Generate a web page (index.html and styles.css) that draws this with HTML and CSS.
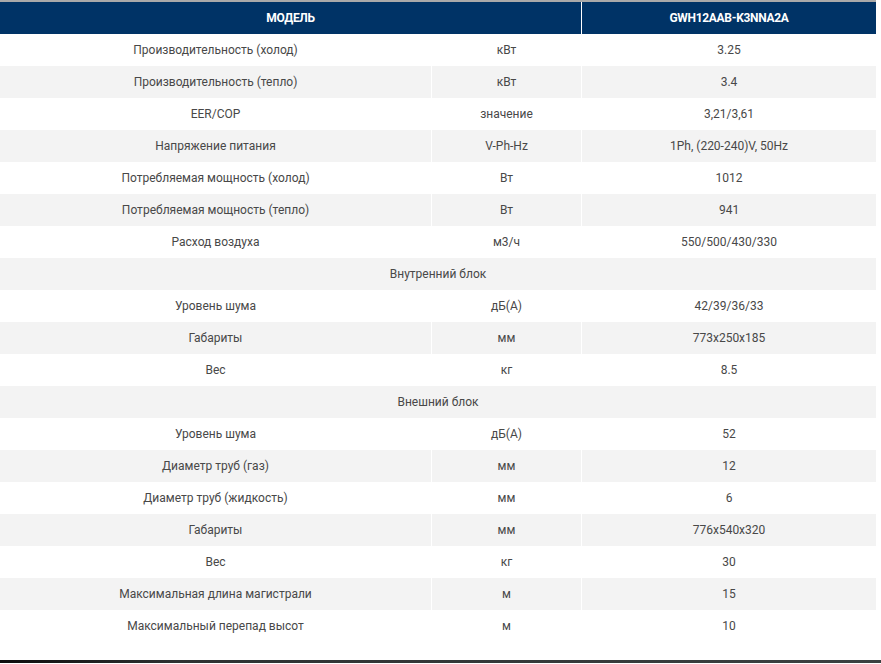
FILE: index.html
```html
<!DOCTYPE html>
<html lang="ru">
<head>
<meta charset="utf-8">
<title>GWH12AAB-K3NNA2A</title>
<link rel="stylesheet" href="styles.css">
</head>
<body>
<div class="page">
  <div class="top-line"></div>
  <table class="specs">
    <colgroup>
      <col class="c1"><col class="c2"><col class="c3">
    </colgroup>
    <thead>
      <tr><th colspan="2">МОДЕЛЬ</th><th class="sep">GWH12AAB-K3NNA2A</th></tr>
    </thead>
    <tbody>
      <tr><td>Производительность (холод)</td><td class="sep">кВт</td><td class="sep">3.25</td></tr>
      <tr><td>Производительность (тепло)</td><td class="sep">кВт</td><td class="sep">3.4</td></tr>
      <tr><td>EER/COP</td><td class="sep">значение</td><td class="sep">3,21/3,61</td></tr>
      <tr><td>Напряжение питания</td><td class="sep">V-Ph-Hz</td><td class="sep">1Ph, (220-240)V, 50Hz</td></tr>
      <tr><td>Потребляемая мощность (холод)</td><td class="sep">Вт</td><td class="sep">1012</td></tr>
      <tr><td>Потребляемая мощность (тепло)</td><td class="sep">Вт</td><td class="sep">941</td></tr>
      <tr><td>Расход воздуха</td><td class="sep">м3/ч</td><td class="sep">550/500/430/330</td></tr>
      <tr><td colspan="3">Внутренний блок</td></tr>
      <tr><td>Уровень шума</td><td class="sep">дБ(А)</td><td class="sep">42/39/36/33</td></tr>
      <tr><td>Габариты</td><td class="sep">мм</td><td class="sep">773x250x185</td></tr>
      <tr><td>Вес</td><td class="sep">кг</td><td class="sep">8.5</td></tr>
      <tr><td colspan="3">Внешний блок</td></tr>
      <tr><td>Уровень шума</td><td class="sep">дБ(А)</td><td class="sep">52</td></tr>
      <tr><td>Диаметр труб (газ)</td><td class="sep">мм</td><td class="sep">12</td></tr>
      <tr><td>Диаметр труб (жидкость)</td><td class="sep">мм</td><td class="sep">6</td></tr>
      <tr><td>Габариты</td><td class="sep">мм</td><td class="sep">776x540x320</td></tr>
      <tr><td>Вес</td><td class="sep">кг</td><td class="sep">30</td></tr>
      <tr><td>Максимальная длина магистрали</td><td class="sep">м</td><td class="sep">15</td></tr>
      <tr><td>Максимальный перепад высот</td><td class="sep">м</td><td class="sep">10</td></tr>
    </tbody>
  </table>
  <div class="spacer"></div>
  <div class="bottom-line"></div>
</div>
</body>
</html>
```

FILE: styles.css
```css
html, body {
  margin: 0;
  padding: 0;
  background: #ffffff;
}
.page {
  width: 881px;
  height: 664px;
  display: flex;
  flex-direction: column;
  overflow: hidden;
}
.top-line {
  height: 2px;
  width: 876px;
  background: #a9a9a9;
  flex: none;
}
.specs {
  width: 876px;
  border-collapse: separate;
  border-spacing: 0;
  table-layout: fixed;
  font-family: Roboto, "Noto Sans", sans-serif;
  font-size: 12px;
  line-height: 16px;
  color: #484848;
  flex: none;
}
.c1 { width: 431px; }
.c2 { width: 150px; }
.c3 { width: 295px; }
.specs th, .specs td {
  box-sizing: border-box;
  text-align: center;
  vertical-align: middle;
  padding: 0 4px;
  height: 32px;
  white-space: nowrap;
}
.specs .sep {
  border-left: 1px solid #ffffff;
}
.specs th {
  background: #003366;
  color: #ffffff;
  font-weight: 700;
  font-size: 12px;
  letter-spacing: -0.3px;
}
.specs tbody tr:nth-child(even) td {
  background: #f3f3f3;
}
.specs tbody tr:nth-child(odd) td {
  background: #ffffff;
}
.spacer {
  flex: 1;
}
.bottom-line {
  height: 3px;
  margin-bottom: 1px;
  background: linear-gradient(to right, #0d0d0d 0%, #2e3232 20%, #3b4141 100%);
  flex: none;
}
```
